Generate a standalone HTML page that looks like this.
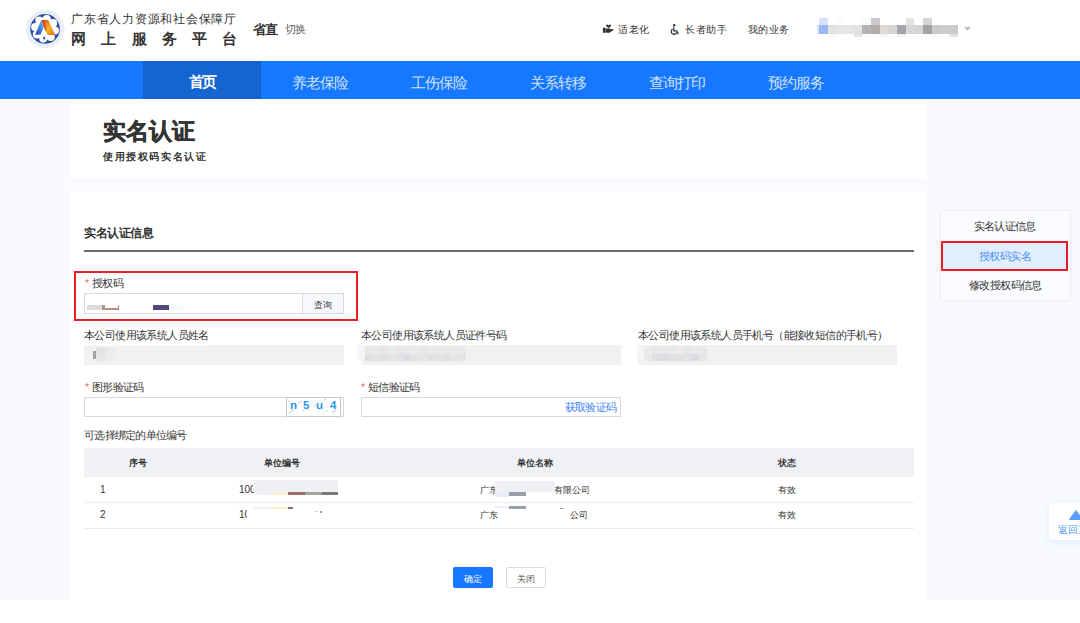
<!DOCTYPE html>
<html><head><meta charset="utf-8">
<style>
*{margin:0;padding:0;box-sizing:border-box}
html,body{width:1080px;height:623px;overflow:hidden;background:#fff}
body{font-family:"Liberation Sans",sans-serif;color:#333;position:relative}
.a{position:absolute;white-space:nowrap;line-height:1}
#hdr{position:absolute;left:0;top:0;width:1080px;height:61px;background:#fff}
#nav{position:absolute;left:0;top:61px;width:1080px;height:38px;background:#1677ff}
#bg{position:absolute;left:0;top:99px;width:1080px;height:501px;background:#f8faff}
.card{position:absolute;background:#fff}
.lbl{letter-spacing:-.6px;font-size:10.5px;color:#333}
.req{color:#f56c6c;margin-right:1px}
.field{position:absolute;background:#f0f1f3;height:20px}
.inp{position:absolute;background:#fff;border:1px solid #d9d9d9;height:20px}
.th{font-size:9px;font-weight:bold;color:#333}
.td{font-size:9px;color:#333}
</style></head><body>
<div id="hdr"></div>
<!-- logo -->
<svg class="a" style="left:24px;top:8px" width="42" height="42" viewBox="0 0 623 623">
  <defs>
    <linearGradient id="gl" x1="1" y1="0" x2="0" y2="1"><stop offset="0" stop-color="#9cc8f2"/><stop offset=".45" stop-color="#4a8ee0"/><stop offset="1" stop-color="#1d47a3"/></linearGradient>
    <linearGradient id="gr" x1="0" y1="0" x2="1" y2="1"><stop offset="0" stop-color="#e0401c"/><stop offset=".55" stop-color="#f9b52a"/><stop offset="1" stop-color="#ef5f1d"/></linearGradient>
  </defs>
  <circle cx="312" cy="310" r="280" fill="#fff" stroke="#c3cce2" stroke-width="7"/>
  <circle cx="312" cy="310" r="248" fill="none" stroke="#eef1f8" stroke-width="40"/>
  <circle cx="312" cy="310" r="246" fill="none" stroke="#c6d0ea" stroke-width="12" stroke-dasharray="8 11"/>
  <circle cx="312" cy="310" r="220" fill="#2c4e9f"/>
  <g fill="#fff">
<circle cx="312" cy="308" r="158"/>
<circle cx="338" cy="162" r="60"/>
<circle cx="433" cy="223" r="60"/>
<circle cx="458" cy="334" r="60"/>
<circle cx="397" cy="429" r="60"/>
<circle cx="286" cy="454" r="60"/>
<circle cx="191" cy="393" r="60"/>
<circle cx="166" cy="282" r="60"/>
<circle cx="227" cy="187" r="60"/>
</g>
  <path d="M300 410 l-22 55 h44z" fill="#2c4e9f"/>
  <path d="M255 178 L300 178 L310 240 L245 395 L165 395 Z" fill="url(#gl)"/>
  <path d="M262 178 L360 178 L462 402 L352 402 L300 300 Z" fill="url(#gr)"/>
  <path d="M268 182 L300 182 L336 340 L318 346 Z" fill="#d8381c" opacity=".7"/>
</svg>
<div class="a" style="left:71px;top:13px;font-size:12.4px;letter-spacing:0.75px;color:#333">广东省人力资源和社会保障厅</div>
<div class="a" style="left:71px;top:32px;font-size:14.5px;font-weight:bold;color:#333;letter-spacing:15.3px">网上服务平台</div>
<div class="a" style="left:253px;top:23px;font-size:13px;letter-spacing:-1px;font-weight:bold;color:#333">省直</div>
<div class="a" style="left:285px;top:24px;font-size:10.5px;letter-spacing:-1px;color:#666">切换</div>

<!-- header right -->
<svg class="a" style="left:602px;top:24px" width="12" height="10" viewBox="0 0 12 10">
  <path d="M6.6 4.2L4.4 2.2C3.8 1.6 4.1.6 5 .6c.6 0 1.2.4 1.6.9.4-.5 1-.9 1.6-.9.9 0 1.2 1 .6 1.6z" fill="#333"/>
  <path d="M.9 3.8h2.7v4.9H.9z M3.9 4.4h3.2c.7 0 1.2.4 1.3.9l2-.2c.6 0 .9.3.9.7v.4L7.4 8.7H3.9z" fill="#333"/>
</svg>
<div class="a" style="left:618px;top:25px;font-size:10px;letter-spacing:.5px;color:#333">适老化</div>
<svg class="a" style="left:670px;top:24px" width="10" height="11" viewBox="0 0 10 11">
  <circle cx="4.2" cy="1.2" r="1.2" fill="#333"/>
  <path d="M3.8 3v3.8h3l1.6 3.4" fill="none" stroke="#333" stroke-width="1.2"/>
  <path d="M2.6 4.9a2.9 2.9 0 1 0 4.3 3.3" fill="none" stroke="#333" stroke-width="1.2"/>
</svg>
<div class="a" style="left:685px;top:25px;font-size:10px;letter-spacing:.5px;color:#333">长者助手</div>
<div class="a" style="left:748px;top:25px;font-size:10px;letter-spacing:.4px;color:#333">我的业务</div>
<div class="a" style="left:817px;top:25px;width:2px;height:9px;background:#d6e1fb"></div>
<div class="a" style="left:819px;top:18px;width:9px;height:7px;background:#d8e2fa"></div>
<div class="a" style="left:819px;top:25px;width:9px;height:9px;background:#9db6f5"></div>
<div class="a" style="left:828px;top:25px;width:8px;height:9px;background:#e2e2e1"></div>
<div class="a" style="left:828px;top:34px;width:8px;height:3px;background:#faf8f5"></div>
<div class="a" style="left:836px;top:18px;width:9px;height:7px;background:#fbfbfb"></div>
<div class="a" style="left:836px;top:25px;width:9px;height:9px;background:#e4e6e5"></div>
<div class="a" style="left:845px;top:25px;width:9px;height:9px;background:#e5e5e5"></div>
<div class="a" style="left:854px;top:25px;width:8px;height:9px;background:#e2e2e2"></div>
<div class="a" style="left:854px;top:34px;width:8px;height:3px;background:#e4e4e6"></div>
<div class="a" style="left:862px;top:18px;width:9px;height:7px;background:#fbfbfb"></div>
<div class="a" style="left:862px;top:25px;width:9px;height:9px;background:#b3b4b6"></div>
<div class="a" style="left:871px;top:18px;width:9px;height:7px;background:#cbcccf"></div>
<div class="a" style="left:871px;top:25px;width:9px;height:9px;background:#b2adaa"></div>
<div class="a" style="left:880px;top:25px;width:8px;height:9px;background:#dcd9d6"></div>
<div class="a" style="left:880px;top:34px;width:8px;height:3px;background:#f5f7f6"></div>
<div class="a" style="left:888px;top:25px;width:9px;height:9px;background:#d7d6d4"></div>
<div class="a" style="left:897px;top:25px;width:9px;height:9px;background:#a3a5aa"></div>
<div class="a" style="left:897px;top:34px;width:9px;height:3px;background:#f3f3f5"></div>
<div class="a" style="left:906px;top:18px;width:8px;height:7px;background:#e2e2e2"></div>
<div class="a" style="left:906px;top:25px;width:8px;height:9px;background:#d8d8d8"></div>
<div class="a" style="left:914px;top:25px;width:9px;height:9px;background:#d7d6d4"></div>
<div class="a" style="left:923px;top:18px;width:9px;height:7px;background:#d9d5d3"></div>
<div class="a" style="left:923px;top:25px;width:9px;height:9px;background:#a3a3a5"></div>
<div class="a" style="left:932px;top:25px;width:8px;height:9px;background:#c8c9cb"></div>
<div class="a" style="left:932px;top:34px;width:8px;height:3px;background:#f9f9f9"></div>
<div class="a" style="left:940px;top:25px;width:9px;height:9px;background:#cbccce"></div>
<div class="a" style="left:949px;top:25px;width:9px;height:9px;background:#cbccce"></div>
<div class="a" style="left:949px;top:34px;width:9px;height:3px;background:#e2e4e6"></div>
<svg class="a" style="left:964px;top:27px" width="7" height="4" viewBox="0 0 7 4"><path d="M0 0h7L3.5 4z" fill="#bfbfbf"/></svg>

<!-- nav -->
<div id="nav"></div>
<div class="a" style="left:143px;top:61px;width:118px;height:38px;background:#1565d0"></div>
<div class="a" style="left:189px;top:74px;font-size:15px;letter-spacing:-2.3px;font-weight:bold;color:#fff">首页</div>
<div class="a" style="left:292px;top:75px;font-size:15px;letter-spacing:-.9px;color:#d0e1ff">养老保险</div>
<div class="a" style="left:411px;top:75px;font-size:15px;letter-spacing:-.9px;color:#d0e1ff">工伤保险</div>
<div class="a" style="left:530px;top:75px;font-size:15px;letter-spacing:-.9px;color:#d0e1ff">关系转移</div>
<div class="a" style="left:649px;top:75px;font-size:15px;letter-spacing:-.9px;color:#d0e1ff">查询打印</div>
<div class="a" style="left:768px;top:75px;font-size:15px;letter-spacing:-.9px;color:#d0e1ff">预约服务</div>

<!-- body bg -->
<div id="bg"></div>
<div class="card" style="left:71px;top:99px;width:856px;height:79px"></div>
<div class="card" style="left:71px;top:191px;width:856px;height:409px"></div>

<div class="a" style="left:103px;top:120px;font-size:23.3px;font-weight:bold;color:#333;-webkit-text-stroke:.5px #333">实名认证</div>
<div class="a" style="left:103px;top:152px;font-size:10px;letter-spacing:1.6px;font-weight:bold;color:#333">使用授权码实名认证</div>

<div class="a" style="left:84px;top:227px;font-size:12px;letter-spacing:-.4px;font-weight:bold;color:#333">实名认证信息</div>
<div class="a" style="left:84px;top:250px;width:830px;height:2px;background:#6a6a6a"></div>

<!-- authorization code -->
<div class="a" style="left:74px;top:271px;width:284px;height:50px;border:2px solid #ec1c24"></div>
<div class="a lbl" style="left:85px;top:278px"><span class="req">* </span>授权码</div>
<div class="inp" style="left:84px;top:293px;width:260px;height:21px"></div>
<div class="a" style="left:302px;top:293px;width:42px;height:21px;background:#f6f8fc;border:1px solid #d9d9d9"></div>
<div class="a" style="left:314px;top:301px;font-size:9px;color:#333">查询</div>
<div class="a" style="left:87px;top:305px;width:15px;height:5px;background:#dcdcdc"></div>
<div class="a" style="left:102px;top:305px;width:17px;height:5px;background:#b58f80"></div>
<div class="a" style="left:105px;top:305px;width:13px;height:3px;background:#fff"></div>
<div class="a" style="left:153px;top:305px;width:16px;height:5px;background:#4e4a7c"></div>
<div class="a" style="left:169px;top:305px;width:16px;height:5px;background:#f3fbfb"></div>

<!-- row 2 -->
<div class="a lbl" style="left:84px;top:330px">本公司使用该系统人员姓名</div>
<div class="field" style="left:84px;top:345px;width:260px"></div>
<div class="a" style="left:95px;top:345px;width:114px;height:2px;background:#f4f5f6"></div>
<div class="a" style="left:96px;top:347px;width:11px;height:7px;background:#e4e4e6"></div>
<div class="a" style="left:107px;top:347px;width:9px;height:7px;background:#eaebed"></div>
<div class="a" style="left:96px;top:354px;width:11px;height:7px;background:#e7e8ea"></div>
<div class="a" style="left:107px;top:354px;width:9px;height:7px;background:#ecedef"></div>
<div class="a" style="left:93px;top:351px;width:3px;height:8px;background:#a8a29c"></div>

<div class="a lbl" style="left:361px;top:330px">本公司使用该系统人员证件号码</div>
<div class="field" style="left:361px;top:345px;width:260px"></div>
<div class="a" style="left:357px;top:345px;width:8px;height:15px;background:#f6f6f7"></div>
<div class="a" style="left:365px;top:346px;width:7px;height:8px;background:#e6e7e9"></div>
<div class="a" style="left:365px;top:354px;width:7px;height:7px;background:#dedfe1"></div>
<div class="a" style="left:372px;top:346px;width:8px;height:8px;background:#e8e9eb"></div>
<div class="a" style="left:372px;top:354px;width:8px;height:7px;background:#e2e3e5"></div>
<div class="a" style="left:380px;top:346px;width:8px;height:8px;background:#e5e6e8"></div>
<div class="a" style="left:380px;top:354px;width:8px;height:7px;background:#dfe0e2"></div>
<div class="a" style="left:388px;top:346px;width:8px;height:8px;background:#e9eaec"></div>
<div class="a" style="left:388px;top:354px;width:8px;height:7px;background:#e4e5e7"></div>
<div class="a" style="left:396px;top:346px;width:8px;height:8px;background:#e6e7e9"></div>
<div class="a" style="left:396px;top:354px;width:8px;height:7px;background:#e1e2e4"></div>
<div class="a" style="left:404px;top:346px;width:7px;height:8px;background:#e8e9eb"></div>
<div class="a" style="left:404px;top:354px;width:7px;height:7px;background:#dcdde0"></div>
<div class="a" style="left:411px;top:346px;width:8px;height:8px;background:#eaebed"></div>
<div class="a" style="left:411px;top:354px;width:8px;height:7px;background:#e3e4e6"></div>
<div class="a" style="left:419px;top:346px;width:8px;height:8px;background:#e6e7e9"></div>
<div class="a" style="left:419px;top:354px;width:8px;height:7px;background:#e5e6e8"></div>
<div class="a" style="left:427px;top:346px;width:8px;height:8px;background:#e9eaec"></div>
<div class="a" style="left:427px;top:354px;width:8px;height:7px;background:#e0e1e3"></div>
<div class="a" style="left:435px;top:346px;width:8px;height:8px;background:#e7e8ea"></div>
<div class="a" style="left:435px;top:354px;width:8px;height:7px;background:#e2e3e5"></div>
<div class="a" style="left:443px;top:346px;width:7px;height:8px;background:#e8e9eb"></div>
<div class="a" style="left:443px;top:354px;width:7px;height:7px;background:#dfe0e2"></div>
<div class="a" style="left:450px;top:346px;width:8px;height:8px;background:#e7e8ea"></div>
<div class="a" style="left:450px;top:354px;width:8px;height:7px;background:#e4e5e7"></div>
<div class="a" style="left:458px;top:346px;width:8px;height:8px;background:#e9eaec"></div>
<div class="a" style="left:458px;top:354px;width:8px;height:7px;background:#e3e4e6"></div>

<div class="a lbl" style="left:638px;top:330px">本公司使用该系统人员手机号（能接收短信的手机号）</div>
<div class="field" style="left:638px;top:345px;width:259px"></div>
<div class="a" style="left:637px;top:346px;width:7px;height:15px;background:#f4f4f5"></div>
<div class="a" style="left:644px;top:346px;width:8px;height:8px;background:#eaebed"></div>
<div class="a" style="left:644px;top:354px;width:8px;height:7px;background:#e8e9eb"></div>
<div class="a" style="left:652px;top:346px;width:8px;height:8px;background:#e6e7e9"></div>
<div class="a" style="left:652px;top:354px;width:8px;height:7px;background:#dedfe1"></div>
<div class="a" style="left:660px;top:346px;width:8px;height:8px;background:#e8e9eb"></div>
<div class="a" style="left:660px;top:354px;width:8px;height:7px;background:#dcdde0"></div>
<div class="a" style="left:668px;top:346px;width:8px;height:8px;background:#e8e9eb"></div>
<div class="a" style="left:668px;top:354px;width:8px;height:7px;background:#e0e1e3"></div>
<div class="a" style="left:676px;top:346px;width:7px;height:8px;background:#ebeced"></div>
<div class="a" style="left:676px;top:354px;width:7px;height:7px;background:#dfe0e2"></div>
<div class="a" style="left:683px;top:346px;width:8px;height:8px;background:#e6e7e9"></div>
<div class="a" style="left:683px;top:354px;width:8px;height:7px;background:#e1e2e4"></div>
<div class="a" style="left:691px;top:346px;width:8px;height:8px;background:#e9eaec"></div>
<div class="a" style="left:691px;top:354px;width:8px;height:7px;background:#dcdde0"></div>
<div class="a" style="left:699px;top:346px;width:8px;height:8px;background:#e8e9eb"></div>
<div class="a" style="left:699px;top:354px;width:8px;height:7px;background:#e5e6e8"></div>

<!-- row 3 -->
<div class="a lbl" style="left:85px;top:382px"><span class="req">* </span>图形验证码</div>
<div class="inp" style="left:84px;top:397px;width:260px"></div>
<div class="a" style="left:286px;top:397px;width:55px;height:20px;border:1px solid #c8c8c8;background:#fff"></div>
<svg class="a" style="left:287px;top:398px" width="53" height="19" viewBox="0 0 53 19">
  <g fill="#9a9a9a">
    <circle cx="2" cy="3" r=".6"/><circle cx="12" cy="5" r=".5"/><circle cx="13" cy="4" r=".5"/><circle cx="14" cy="3.2" r=".5"/>
    <circle cx="9" cy="8" r=".6"/><circle cx="16" cy="12.5" r=".6"/><circle cx="21" cy="11" r=".5"/>
    <circle cx="4" cy="14" r=".5"/><circle cx="5" cy="13" r=".5"/><circle cx="6" cy="12" r=".5"/><circle cx="2" cy="15" r=".5"/>
    <circle cx="38" cy="1.5" r=".6"/><circle cx="36" cy="15" r=".6"/><circle cx="40" cy="13" r=".6"/><circle cx="44" cy="8.5" r=".6"/>
    <circle cx="46" cy="14.5" r=".5"/><circle cx="47" cy="13.5" r=".5"/><circle cx="48" cy="12.5" r=".5"/><circle cx="49" cy="11.5" r=".5"/>
    <circle cx="28" cy="8" r=".5"/>
  </g>
</svg>
<div class="a" style="left:290px;top:400px;font-size:11.5px;font-weight:bold;color:#2a98f2;font-family:'Liberation Sans',sans-serif">n</div>
<div class="a" style="left:303px;top:400px;font-size:11.5px;font-weight:bold;color:#2a98f2;font-family:'Liberation Sans',sans-serif">5</div>
<div class="a" style="left:316px;top:400px;font-size:11.5px;font-weight:bold;color:#2a98f2;font-family:'Liberation Sans',sans-serif">u</div>
<div class="a" style="left:330px;top:400px;font-size:11.5px;font-weight:bold;color:#2a98f2;font-family:'Liberation Sans',sans-serif">4</div>

<div class="a lbl" style="left:361px;top:382px"><span class="req">* </span>短信验证码</div>
<div class="inp" style="left:361px;top:397px;width:260px"></div>
<div class="a" style="left:565px;top:402px;font-size:10.5px;letter-spacing:-.83px;color:#3b82f6">获取验证码</div>

<div class="a lbl" style="left:84px;top:430px;letter-spacing:-.75px">可选择绑定的单位编号</div>

<!-- table -->
<div class="a" style="left:84px;top:448px;width:830px;height:29px;background:#f0f1f4"></div>
<div class="a th" style="left:129px;top:459px">序号</div>
<div class="a th" style="left:264px;top:459px">单位编号</div>
<div class="a th" style="left:517px;top:459px">单位名称</div>
<div class="a th" style="left:778px;top:459px">状态</div>
<div class="a" style="left:84px;top:502px;width:830px;height:1px;background:#ebebeb"></div>
<div class="a" style="left:84px;top:528px;width:830px;height:1px;background:#ebebeb"></div>

<div class="a td" style="left:100px;top:485px;font-size:10px">1</div>
<div class="a td" style="left:239px;top:485px;font-size:10px">100</div>
<div class="a td" style="left:480px;top:486px">广东</div>
<div class="a td" style="left:554px;top:486px">有限公司</div>
<div class="a td" style="left:778px;top:486px">有效</div>

<div class="a td" style="left:100px;top:510px;font-size:10px">2</div>
<div class="a td" style="left:239px;top:510px;font-size:10px">10</div>
<div class="a td" style="left:480px;top:511px">广东</div>
<div class="a td" style="left:570px;top:511px">公司</div>
<div class="a td" style="left:778px;top:511px">有效</div>

<!-- blurred table pieces -->
<div class="a" style="left:253px;top:480px;width:85px;height:12px;background:#eff0f4"></div>
<div class="a" style="left:254px;top:492px;width:17px;height:3px;background:#eef2f8"></div>
<div class="a" style="left:271px;top:492px;width:17px;height:3px;background:#f6f0cc"></div>
<div class="a" style="left:288px;top:492px;width:17px;height:3px;background:#9b6c6c"></div>
<div class="a" style="left:305px;top:492px;width:17px;height:3px;background:#a1a29a"></div>
<div class="a" style="left:322px;top:492px;width:16px;height:3px;background:#7c7a78"></div>
<div class="a" style="left:247px;top:505px;width:92px;height:14px;background:#fff"></div>
<div class="a" style="left:254px;top:507px;width:17px;height:2px;background:#eef0f8"></div>
<div class="a" style="left:271px;top:507px;width:17px;height:2px;background:#f5efc8"></div>
<div class="a" style="left:288px;top:507px;width:5px;height:2px;background:#9b6c6c"></div>

<div class="a" style="left:495px;top:481px;width:60px;height:11px;background:#eff0f4"></div>
<div class="a" style="left:495px;top:492px;width:14px;height:5px;background:#ecebfa"></div>
<div class="a" style="left:509px;top:492px;width:17px;height:4px;background:#9aa0aa"></div>
<div class="a" style="left:495px;top:506px;width:14px;height:2px;background:#ecebfa"></div>
<div class="a" style="left:509px;top:506px;width:17px;height:3px;background:#9aa0aa"></div>

<div class="a" style="left:315px;top:511px;width:3px;height:1px;background:#c8cdd6"></div>
<div class="a" style="left:320px;top:511px;width:2px;height:2px;background:#9aa8c0"></div>
<div class="a" style="left:560px;top:508px;width:3px;height:1px;background:#c080c8"></div>
<!-- buttons -->
<div class="a" style="left:453px;top:567px;width:40px;height:21px;background:#1677ff;border-radius:2px"></div>
<div class="a" style="left:464px;top:575px;font-size:9px;color:#fff">确定</div>
<div class="a" style="left:506px;top:567px;width:40px;height:21px;background:#fff;border:1px solid #dcdcdc;border-radius:2px"></div>
<div class="a" style="left:517px;top:575px;font-size:9px;color:#555">关闭</div>

<!-- side menu -->
<div class="a" style="left:941px;top:211px;width:129px;height:89px;background:#fafbfe;box-shadow:0 0 3px rgba(0,0,0,.12)"></div>
<div class="a" style="left:974px;top:221px;font-size:10.5px;letter-spacing:-.78px;color:#333">实名认证信息</div>
<div class="a" style="left:941px;top:241px;width:127px;height:30px;background:#e1eefd;border:2px solid #e81e26"></div>
<div class="a" style="left:979px;top:251px;font-size:10.5px;letter-spacing:-.6px;color:#4b8ef5">授权码实名</div>
<div class="a" style="left:969px;top:280px;font-size:10.5px;letter-spacing:-.6px;color:#333">修改授权码信息</div>

<!-- back to top -->
<div class="a" style="left:1049px;top:503px;width:40px;height:37px;background:#fff;border-radius:3px;box-shadow:0 2px 6px rgba(22,119,255,.12)"></div>
<svg class="a" style="left:1069px;top:510px" width="14" height="10" viewBox="0 0 14 10"><path d="M7 0.5L13.5 9.5H.5z" fill="#5b9cf9" stroke="#5b9cf9" stroke-linejoin="round"/></svg>
<div class="a" style="left:1058px;top:525px;font-size:9.5px;color:#5b9cf9">返回顶部</div>
</body></html>
